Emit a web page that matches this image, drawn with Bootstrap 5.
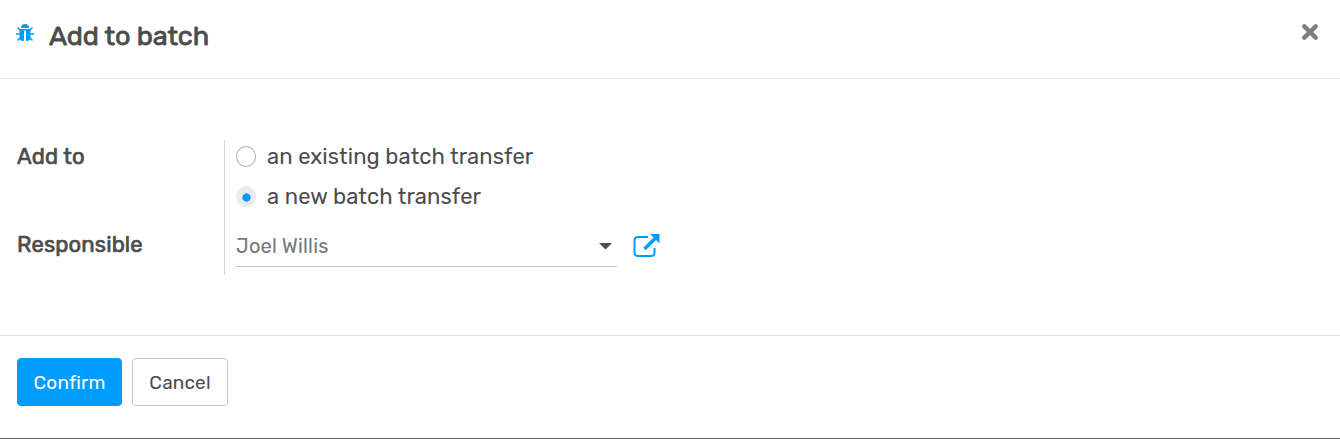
<!DOCTYPE html>
<html lang="en">
<head>
<meta charset="utf-8">
<title>Add to batch</title>
<link href="https://cdn.jsdelivr.net/npm/bootstrap@5.3.0/dist/css/bootstrap.min.css" rel="stylesheet">
<style>
body{font-family:Rubik,Roboto,sans-serif;color:#4c4c4c;background:#fff;overflow:hidden}
.dialog{height:439px;border:0;border-bottom:1px solid #5f5f5f;border-radius:0;color:#4c4c4c}
.dialog .modal-header{height:79px;padding:0 20px 0 15px;border-bottom:1px solid #dee2e6;border-radius:0;flex:none;align-items:flex-start}
.dialog .modal-title{font-size:27px;line-height:32px;font-weight:400;letter-spacing:-.13px;-webkit-text-stroke:.8px #4c4c4c;margin:20px 0 0 14px}
.bug{margin-top:23px}
.dismiss{margin-top:22px;line-height:0}
.dialog .modal-body{padding:61px 17px 0;height:256px;flex:none}
.labels{width:208px;height:135px;border-right:1px solid #d6d6d6;font-size:22px;line-height:32px;font-weight:400;letter-spacing:.15px;-webkit-text-stroke:.7px #4c4c4c;padding-top:1px}
.fields{padding-left:11px;font-size:22px}
.choice{height:32px;margin-bottom:8px;line-height:32px;letter-spacing:.1px}
.choice span{padding-top:2px}
.choice .form-check-input{width:20px;height:21px;margin:0 11px 0 0;border:1px solid #adb5bd;flex:none;box-shadow:none}
.choice .form-check-input:checked{border-color:#e9ecef;background:radial-gradient(circle at 9.500px 10.5px,#009dff 3.8px,#e9ecef 4.5px)}
.picker{margin-top:14px}
.person{width:381px;height:41px;border-bottom:1px solid #c4c4c4;font-size:20px;color:#777;letter-spacing:.2px;padding-right:5px}
.dialog .modal-footer{border-top:1px solid #dee2e6;border-radius:0;padding:22px 17px 0;gap:10px;justify-content:flex-start;align-items:flex-start;flex:1}
.dialog .modal-footer .btn{margin:0;padding:2px 0 0;height:48px;font-size:19px;border-radius:4px;letter-spacing:.15px}
.confirm{width:105px;--bs-btn-bg:#009dff;--bs-btn-border-color:#009dff}
.cancel{width:96px;--bs-btn-color:#4c4c4c;--bs-btn-border-color:#c9c9c9}
</style>
</head>
<body>
<main class="modal-content dialog d-flex flex-column">
  <header class="modal-header d-flex">
    <svg class="bug" width="20" height="21" viewBox="0 0 20 21" fill="#009dff"><path d="M6 5a4 4 0 0 1 8 0z"/><path d="M4.500 6h11v8.500q0 3.500-4.500 3.500V7.500H9V18Q4.500 18 4.500 14.500z"/><path d="M5.500 7.500 2.500 4.500M14.500 7.500l3-3M5 11H1M15 11h4M5.500 14.500l-3 3M14.500 14.500l3 3" fill="none" stroke="#009dff" stroke-width="1.500"/></svg>
    <h4 class="modal-title">Add to batch</h4>
    <a class="dismiss ms-auto" role="button" aria-label="Close"><svg width="20" height="20" viewBox="0 0 20 20"><path d="M4.300 4.300 15.700 15.700M15.700 4.300 4.300 15.700" stroke="#7f7f7f" stroke-width="4.500" stroke-linecap="round"/></svg></a>
  </header>
  <section class="modal-body d-flex">
    <div class="labels d-flex flex-column">
      <label class="mb-4 pb-1"><span>Add to</span></label>
      <label class="mt-4 pt-1"><span>Responsible</span></label>
    </div>
    <div class="fields">
      <label class="choice d-flex align-items-center"><input class="form-check-input" type="radio" name="mode"><span>an existing batch transfer</span></label>
      <label class="choice d-flex align-items-center"><input class="form-check-input" type="radio" name="mode" checked><span>a new batch transfer</span></label>
      <div class="picker d-flex">
        <div class="person d-flex align-items-center justify-content-between"><span>Joel Willis</span>
          <svg width="13" height="7" viewBox="0 0 13 7"><path d="M0 0h13L6.500 6.500z" fill="#4c4c4c"/></svg></div>
        <svg class="ms-3 mt-2" width="28" height="26" viewBox="0 1 28 26" fill="none" stroke="#009dff" stroke-width="2"><path d="M15 4H5Q1.500 4 1.500 7.500v12Q1.500 23 5 23h13q3.500 0 3.500-3.500V15"/><path d="M11.500 16 23 4.500" stroke-width="3.500"/><path d="M17 1h9.500v9.500z" fill="#009dff" stroke="none"/></svg>
      </div>
    </div>
  </section>
  <footer class="modal-footer d-flex">
    <button class="btn btn-primary confirm">Confirm</button>
    <button class="btn cancel">Cancel</button>
  </footer>
</main>
<script src="https://cdn.jsdelivr.net/npm/bootstrap@5.3.0/dist/js/bootstrap.bundle.min.js"></script>
</body>
</html>
